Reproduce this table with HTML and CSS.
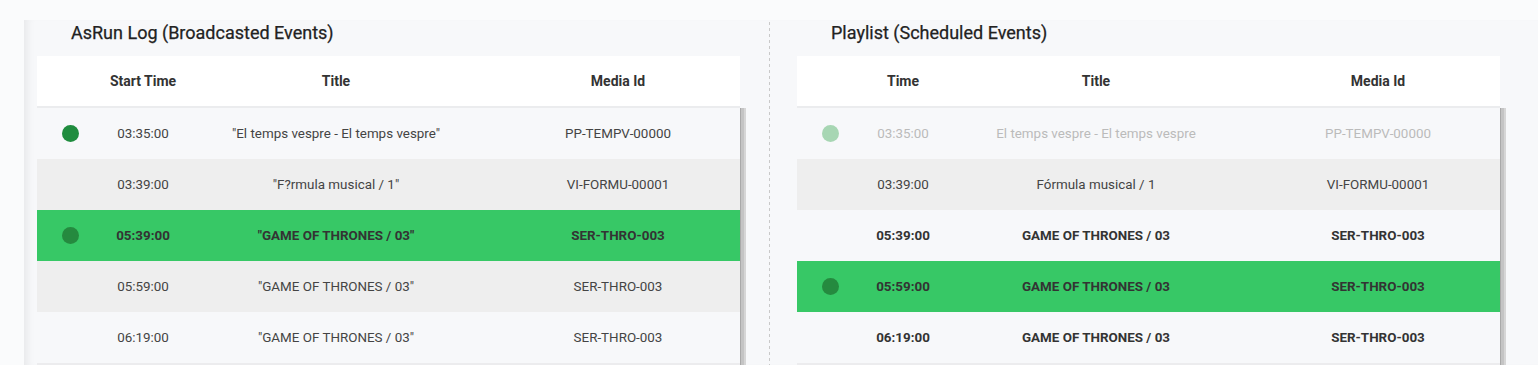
FILE: index.html
```html
<!DOCTYPE html>
<html>
<head>
<meta charset="utf-8">
<link rel="stylesheet" href="styles.css">
</head>
<body>
<div class="page">
  <div class="panel">
    <section class="section">
      <h2 class="title">AsRun Log (Broadcasted Events)</h2>
      <div class="table">
        <div class="row head">
          <div></div><div>Start Time</div><div>Title</div><div class="media">Media Id</div>
        </div>
        <div class="body">
          <div class="rows">
            <div class="row odd"><div><span class="dot"></span></div><div>03:35:00</div><div>"El temps vespre - El temps vespre"</div><div class="media">PP-TEMPV-00000</div></div>
            <div class="row even"><div></div><div>03:39:00</div><div>"F?rmula musical / 1"</div><div class="media">VI-FORMU-00001</div></div>
            <div class="row live"><div><span class="dot"></span></div><div>05:39:00</div><div>"GAME OF THRONES / 03"</div><div class="media">SER-THRO-003</div></div>
            <div class="row even"><div></div><div>05:59:00</div><div>"GAME OF THRONES / 03"</div><div class="media">SER-THRO-003</div></div>
            <div class="row odd"><div></div><div>06:19:00</div><div>"GAME OF THRONES / 03"</div><div class="media">SER-THRO-003</div></div>
          </div>
          <div class="scrollbar"></div>
        </div>
      </div>
    </section>
    <div class="divider"></div>
    <section class="section">
      <h2 class="title">Playlist (Scheduled Events)</h2>
      <div class="table">
        <div class="row head">
          <div></div><div>Time</div><div>Title</div><div class="media">Media Id</div>
        </div>
        <div class="body">
          <div class="rows">
            <div class="row odd past"><div><span class="dot"></span></div><div>03:35:00</div><div>El temps vespre - El temps vespre</div><div class="media">PP-TEMPV-00000</div></div>
            <div class="row even"><div></div><div>03:39:00</div><div>Fórmula musical / 1</div><div class="media">VI-FORMU-00001</div></div>
            <div class="row odd strong"><div></div><div>05:39:00</div><div>GAME OF THRONES / 03</div><div class="media">SER-THRO-003</div></div>
            <div class="row live"><div><span class="dot"></span></div><div>05:59:00</div><div>GAME OF THRONES / 03</div><div class="media">SER-THRO-003</div></div>
            <div class="row odd strong"><div></div><div>06:19:00</div><div>GAME OF THRONES / 03</div><div class="media">SER-THRO-003</div></div>
          </div>
          <div class="scrollbar"></div>
        </div>
      </div>
    </section>
  </div>
</div>
</body>
</html>
```
FILE: styles.css
```css
* { box-sizing: border-box; }
html, body { margin: 0; padding: 0; }
body {
  background: #fafbfc;
  font-family: Roboto, "Liberation Sans", sans-serif;
  color: #444;
  width: 1538px;
  height: 365px;
  overflow: hidden;
}
.page {
  padding: 20px 0 0 24px;
  height: 100%;
}
.panel {
  display: flex;
  height: 100%;
  background: #f7f8fa;
  padding-left: 13px;
  box-shadow: inset 9px 0 8px -6px rgba(0, 0, 0, 0.07);
}
.section {
  width: 709px;
  flex: none;
}
.title {
  margin: 0;
  height: 36px;
  padding: 0 0 0 34px;
  font-size: 18px;
  font-weight: 400;
  line-height: 26px;
  color: #222;
  -webkit-text-stroke: 0.25px #222;
}
.divider {
  width: 1px;
  margin: 2px 27px 0 23px;
  background: repeating-linear-gradient(to bottom, #c9c9c9 0 3px, transparent 3px 6px);
}
.row {
  display: grid;
  grid-template-columns: 66px 80px 306px 251px;
  align-items: center;
  height: 51px;
  font-size: 13.4px;
}
.row > div {
  text-align: center;
  white-space: nowrap;
}
.row > .media { padding-left: 7px; }
.head {
  width: 703px;
  height: 52px;
  background: #fff;
  border-bottom: 2px solid #ebecee;
  font-size: 14px;
  font-weight: 700;
  color: #333;
}
.body {
  display: flex;
}
.rows {
  width: 703px;
  border-bottom: 2px solid #ececee;
}
.scrollbar {
  width: 6px;
  background: linear-gradient(to right, #a9a9a9 0 1px, #c4c4c4 1px 4px, #d6d6d6 4px);
}
.odd { background: #f7f8fa; }
.even { background: #eeeeee; }
.live {
  background: #37c866;
  font-weight: 700;
  color: #333;
}
.strong { font-weight: 700; color: #333; }
.past { color: #bbbbbb; }
.dot {
  display: inline-block;
  width: 17px;
  height: 17px;
  border-radius: 50%;
  background: #1f8c3e;
  vertical-align: middle;
}
.live .dot { background: #258a3f; }
.past .dot { background: #a7d6b3; }
```
